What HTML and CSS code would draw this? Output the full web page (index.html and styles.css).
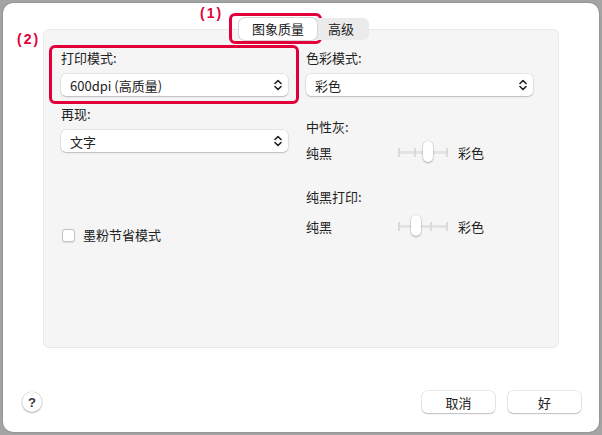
FILE: index.html
```html
<!DOCTYPE html>
<html lang="zh-CN">
<head>
    <meta charset="UTF-8">
    <title>打印设置 - 图象质量</title>
    <link rel="stylesheet" href="styles.css">
</head>
<body>
    <div class="window">
        <div class="tabs">
            <div class="tab active">图象质量</div>
            <div class="tab">高级</div>
        </div>

        <div class="panel">
            <div class="column">
                <div class="label">打印模式:</div>
                <div class="select">
                    <span>600dpi (高质量)</span>
                    <svg class="chevrons" width="8" height="12" viewBox="0 0 8 12"><path d="M1 4.5L4 1.5L7 4.5M1 7.5L4 10.5L7 7.5"/></svg>
                </div>
                <div class="label spaced">再现:</div>
                <div class="select">
                    <span>文字</span>
                    <svg class="chevrons" width="8" height="12" viewBox="0 0 8 12"><path d="M1 4.5L4 1.5L7 4.5M1 7.5L4 10.5L7 7.5"/></svg>
                </div>
                <label class="check-row">
                    <span class="checkbox"></span>
                    <span>墨粉节省模式</span>
                </label>
            </div>

            <div class="column">
                <div class="label">色彩模式:</div>
                <div class="select">
                    <span>彩色</span>
                    <svg class="chevrons" width="8" height="12" viewBox="0 0 8 12"><path d="M1 4.5L4 1.5L7 4.5M1 7.5L4 10.5L7 7.5"/></svg>
                </div>
                <div class="label gray-label">中性灰:</div>
                <div class="slider-row first">
                    <span class="slider-min">纯黑</span>
                    <div class="slider">
                        <span class="tick"></span><span class="tick"></span><span class="tick"></span><span class="tick"></span>
                        <span class="knob knob-2"></span>
                    </div>
                    <span class="slider-max">彩色</span>
                </div>
                <div class="label black-label">纯黑打印:</div>
                <div class="slider-row second">
                    <span class="slider-min">纯黑</span>
                    <div class="slider">
                        <span class="tick"></span><span class="tick"></span><span class="tick"></span><span class="tick"></span>
                        <span class="knob knob-1"></span>
                    </div>
                    <span class="slider-max">彩色</span>
                </div>
            </div>
        </div>

        <div class="footer">
            <button class="help">?</button>
            <div class="actions">
                <button class="btn">取消</button>
                <button class="btn">好</button>
            </div>
        </div>

        <!-- annotations -->
        <div class="mark mark-1"></div>
        <div class="mark mark-2"></div>
        <div class="mark-label label-1">(1)</div>
        <div class="mark-label label-2">(2)</div>
    </div>
</body>
</html>
```

FILE: styles.css
```css
body {
    margin: 0;
    padding: 3px;
    background-color: #a4a4a4;
    font-family: "Noto Sans CJK SC", "Noto Sans", sans-serif;
    font-size: 13px;
    color: #222;
}
.window {
    position: relative;
    width: 596px;
    height: 429px;
    box-sizing: border-box;
    padding-top: 15px;
    background: #fff;
    border-radius: 10px;
    box-shadow: 0 0 2px rgba(0,0,0,0.3);
    display: flex;
    flex-direction: column;
}
.tabs {
    position: relative;
    z-index: 1;
    align-self: center;
    display: flex;
    height: 22px;
    margin-bottom: -11px;
    margin-left: 6px;
    background: #ebebeb;
    border-radius: 6px;
}
.tab {
    padding: 0 15px 0 11px;
    line-height: 22px;
}
.tab.active {
    padding: 0 13px;
    background: #fff;
    border-radius: 6px;
    box-shadow: 0 0 0 1px #d6d6d6;
}
.panel {
    margin: 0 40px;
    height: 319px;
    box-sizing: border-box;
    padding: 19px 17px 0;
    background: #f5f5f5;
    border: 1px solid #e8e8e8;
    border-radius: 6px;
    display: grid;
    grid-template-columns: 227px 227px;
    column-gap: 18px;
    align-items: start;
}
.column {
    display: flex;
    flex-direction: column;
}
.label {
    line-height: 18px;
    margin-bottom: 7px;
}
.label.spaced {
    margin-top: 9px;
}
.select {
    height: 22px;
    box-sizing: border-box;
    padding: 0 6px 0 9px;
    display: flex;
    align-items: center;
    justify-content: space-between;
    background: #fff;
    border-radius: 5px;
    box-shadow: 0 0 0 0.5px rgba(0,0,0,0.12), 0 1px 1.5px rgba(0,0,0,0.18);
}
.chevrons path {
    fill: none;
    stroke: #222;
    stroke-width: 1.6;
    stroke-linecap: round;
    stroke-linejoin: round;
}
.check-row {
    margin-top: 74px;
    display: flex;
    align-items: center;
    gap: 8px;
    line-height: 18px;
    padding-left: 1px;
}
.checkbox {
    width: 13px;
    height: 13px;
    box-sizing: border-box;
    background: #fff;
    border: 1px solid #c4c4c4;
    border-radius: 3px;
    box-shadow: 0 0.5px 1px rgba(0,0,0,0.1);
}
.gray-label {
    margin-top: 22px;
    margin-bottom: 5px;
}
.black-label {
    margin-top: 25px;
    margin-bottom: 9px;
}
.slider-row {
    display: flex;
    align-items: center;
    height: 22px;
}
.slider-min {
    width: 92px;
}
.slider-max {
    margin-left: 10px;
}
.slider {
    position: relative;
    width: 50px;
    height: 22px;
    display: flex;
    justify-content: space-between;
    align-items: center;
    background: linear-gradient(#e3e3e3, #e3e3e3) center / 100% 3px no-repeat;
}
.tick {
    width: 2px;
    height: 9px;
    background: #dadada;
}
.knob {
    position: absolute;
    top: 0;
    width: 10px;
    height: 21px;
    background: #fff;
    border-radius: 5px;
    box-shadow: 0 0 0 0.5px rgba(0,0,0,0.12), 0 1px 2px rgba(0,0,0,0.25);
}
.knob-2 {
    left: 25px;
}
.knob-1 {
    left: 13px;
}
.footer {
    margin-top: 43px;
    padding: 0 18px 0 19px;
    display: flex;
    justify-content: space-between;
    align-items: center;
}
.help {
    width: 20px;
    height: 20px;
    padding: 0;
    border: none;
    border-radius: 50%;
    background: #fff;
    box-shadow: 0 0 0 0.5px rgba(0,0,0,0.15), 0 1px 2px rgba(0,0,0,0.25);
    font-family: "Liberation Sans", sans-serif;
    font-size: 13px;
    font-weight: bold;
    color: #333;
}
.actions {
    display: flex;
    gap: 13px;
}
.btn {
    width: 73px;
    height: 22px;
    padding: 0;
    border: none;
    border-radius: 5px;
    background: #fff;
    box-shadow: 0 0 0 0.5px rgba(0,0,0,0.15), 0 1px 1.5px rgba(0,0,0,0.2);
    font-family: inherit;
    font-size: 13px;
    color: #222;
}
.mark {
    position: absolute;
    border: 3px solid #e2003a;
    border-radius: 6px;
    box-sizing: border-box;
}
.mark-1 {
    left: 226px;
    top: 10px;
    width: 93px;
    height: 31px;
}
.mark-2 {
    left: 46px;
    top: 42px;
    width: 250px;
    height: 59px;
}
.mark-label {
    position: absolute;
    color: #e2003a;
    font-family: "Liberation Sans", sans-serif;
    font-weight: bold;
    font-size: 14px;
    line-height: 14px;
    letter-spacing: 2px;
}
.label-1 {
    left: 197px;
    top: 3px;
}
.label-2 {
    left: 14px;
    top: 29px;
}
```
